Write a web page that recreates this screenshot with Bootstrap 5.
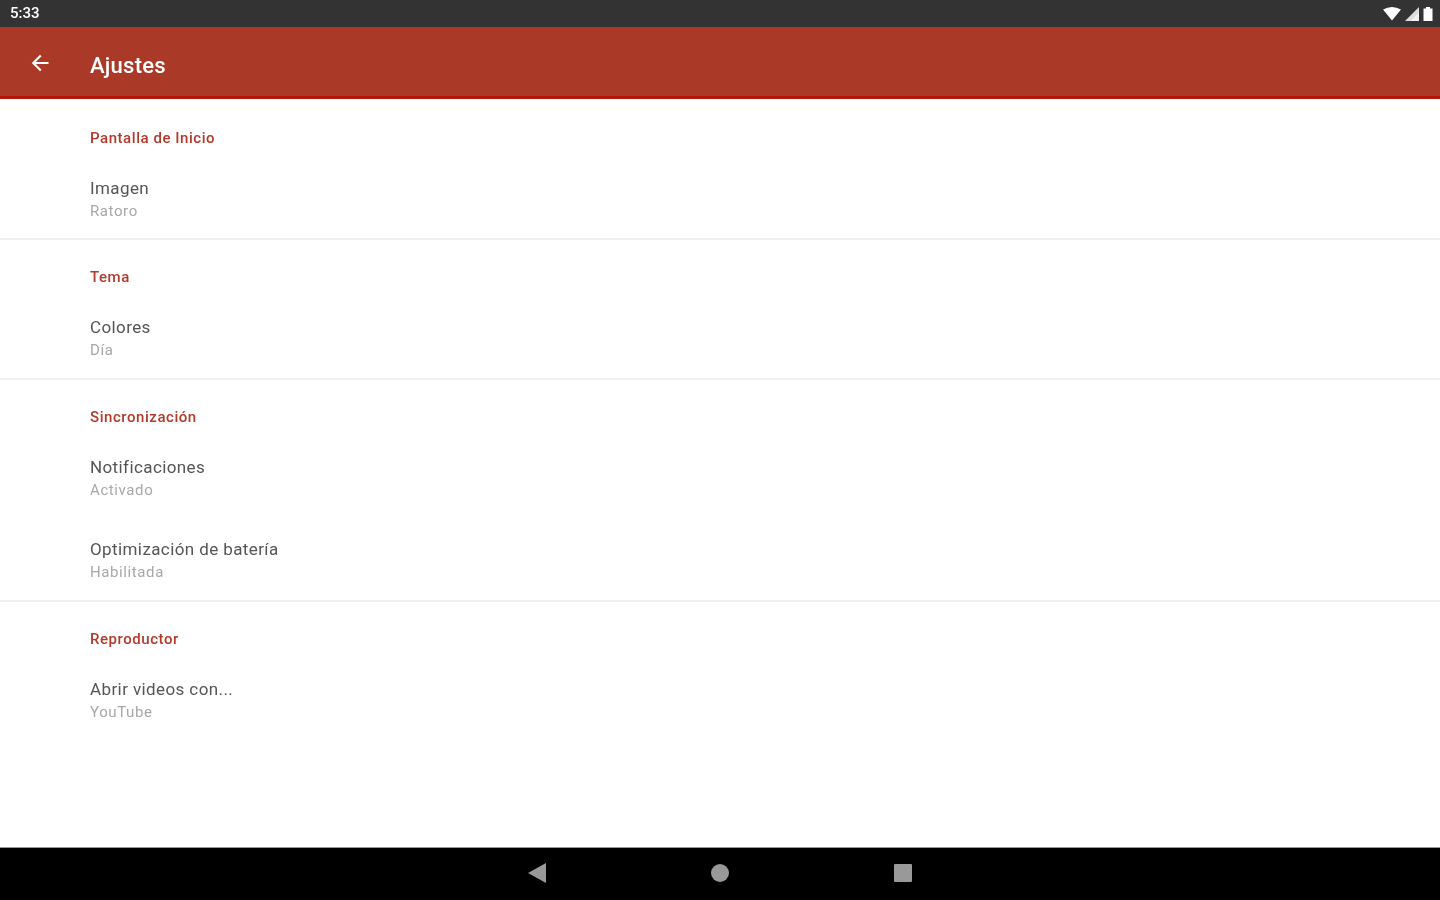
<!DOCTYPE html>
<html lang="es">
<head>
<meta charset="utf-8">
<title>Ajustes</title>
<link href="https://cdn.jsdelivr.net/npm/bootstrap@5.3.0/dist/css/bootstrap.min.css" rel="stylesheet">
<style>
html,body{height:100%;}
body{font-family:Roboto,"Liberation Sans",sans-serif;background:#fff;overflow:hidden;}
.shell{height:900px;}
.statusbar{height:27px;background:#333333;color:#fff;font-size:15px;font-weight:500;padding:0 7px 0 10px;}
.statusbar svg{display:block;}
.appbar{height:72px;background:#ab3928;border-bottom:3px solid #b3160f;color:#fff;}
.backbtn{width:90px;padding-left:30px;margin-top:2px;}
.apptitle{font-size:22px;font-weight:500;line-height:1;margin-top:9px;letter-spacing:.25px;}
.prefs{flex:1 1 auto;}
.prefgroup{height:139px;}
.prefgroup+.prefgroup{height:140px;border-top:2px solid #f1f1f1;}
.prefgroup.widegroup{height:221.5px;}
.cathead{color:#b3392b;font-size:15px;font-weight:500;padding:30px 0 0 90px;line-height:18px;height:61px;letter-spacing:.55px;}
.prefgroup+.prefgroup .cathead{padding-top:28px;height:59px;}
.prefitem{padding-left:90px;height:82px;padding-top:18px;}
.preftitle{color:#555;font-size:17px;line-height:20px;letter-spacing:.4px;}
.prefsum{color:#a8a8a8;font-size:15px;line-height:18px;margin-top:4px;letter-spacing:.6px;}
.navbarbottom{height:53px;background:#000;border-top:1px solid #999;gap:165px;padding-bottom:2px;}
.soft{filter:blur(.6px);}
</style>
</head>
<body>
<div class="shell d-flex flex-column">
  <div class="statusbar d-flex align-items-center justify-content-between">
    <span class="soft">5:33</span>
    <span class="d-flex align-items-center gap-1 soft">
      <svg width="18" height="15" viewBox="0 0 18 14"><path d="M0 3 Q9 -2 18 3 L9 14Z" fill="#fff"/></svg>
      <svg width="14" height="14" viewBox="0 0 13 13"><path d="M13 0V13H0Z" fill="#ddd"/><path d="M13 5V13H5Z" fill="#fff" opacity=".6"/></svg>
      <svg width="10" height="16" viewBox="0 0 10 14"><path d="M3 0H7V1.500H9.500V14H.5V1.500H3Z" fill="#fff"/></svg>
    </span>
  </div>
  <div class="appbar d-flex align-items-center">
    <div class="backbtn soft">
      <svg class="d-block" width="20" height="20" viewBox="0 0 20 20"><path d="M18.500 9H5.800L11.500 3.300 10 1.800 1.800 10 10 18.200 11.500 16.700 5.800 11H18.500Z" fill="#fff"/></svg>
    </div>
    <div class="apptitle soft">Ajustes</div>
  </div>
  <div class="prefs">
    <section class="prefgroup soft">
      <div class="cathead">Pantalla de Inicio</div>
      <div class="prefitem"><div class="preftitle">Imagen</div><div class="prefsum">Ratoro</div></div>
    </section>
    <section class="prefgroup soft">
      <div class="cathead">Tema</div>
      <div class="prefitem"><div class="preftitle">Colores</div><div class="prefsum">Día</div></div>
    </section>
    <section class="prefgroup widegroup soft">
      <div class="cathead">Sincronización</div>
      <div class="prefitem"><div class="preftitle">Notificaciones</div><div class="prefsum">Activado</div></div>
      <div class="prefitem"><div class="preftitle">Optimización de batería</div><div class="prefsum">Habilitada</div></div>
    </section>
    <section class="prefgroup soft">
      <div class="cathead">Reproductor</div>
      <div class="prefitem"><div class="preftitle">Abrir videos con...</div><div class="prefsum">YouTube</div></div>
    </section>
  </div>
  <div class="navbarbottom d-flex align-items-center justify-content-center">
    <svg class="soft" width="18" height="20" viewBox="0 0 18 20"><path d="M18 0V20L0 10Z" fill="#999"/></svg>
    <svg class="soft" width="18" height="18" viewBox="0 0 18 18"><circle cx="9" cy="9" r="9" fill="#999"/></svg>
    <svg class="soft" width="18" height="18" viewBox="0 0 18 18"><rect width="18" height="18" rx="1" fill="#999"/></svg>
  </div>
</div>
<script src="https://cdn.jsdelivr.net/npm/bootstrap@5.3.0/dist/js/bootstrap.bundle.min.js"></script>
</body>
</html>
